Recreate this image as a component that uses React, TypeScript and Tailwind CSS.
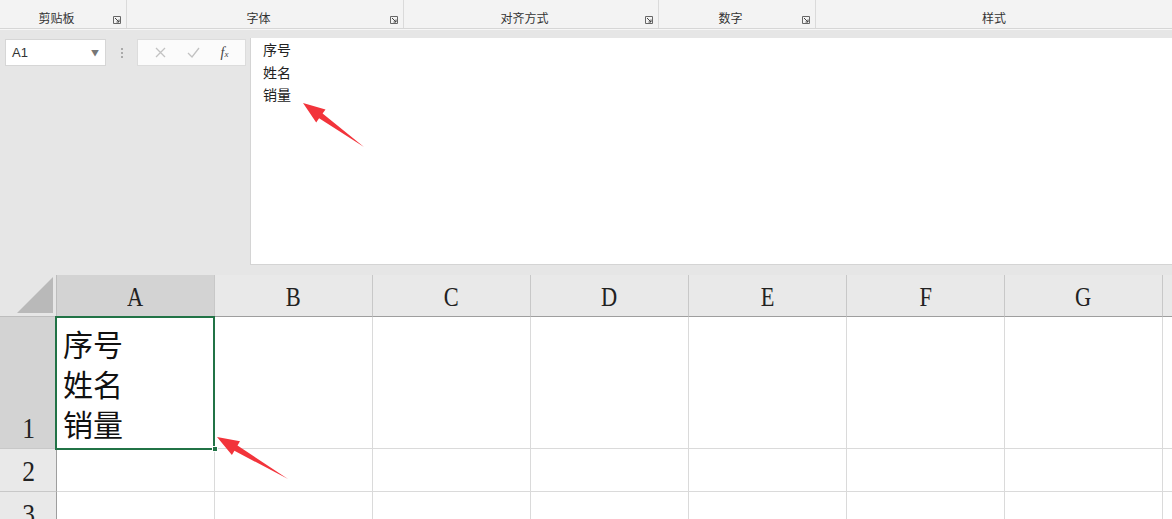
import React from "react";

const serif = { fontFamily: '"Liberation Serif", "Noto Sans CJK SC", serif' };
const sans = { fontFamily: '"Noto Sans CJK SC", "Liberation Sans", sans-serif' };

const groups = [
  { label: "剪贴板", w: "w-[127px]", launcher: true },
  { label: "字体", w: "w-[277px]", launcher: true },
  { label: "对齐方式", w: "w-[255px]", launcher: true },
  { label: "数字", w: "w-[157px]", launcher: true },
  { label: "样式", w: "flex-1", launcher: false },
];

const cols = ["A", "B", "C", "D", "E", "F", "G", ""];

function Launcher() {
  return (
    <svg width="8" height="8" viewBox="0 0 8 8" className="shrink-0">
      <path d="M0.5 0.5h7v7h-7z" fill="none" stroke="#666" strokeWidth="1" />
      <path d="M2 2l4 4M6 3.5V6H3.5" fill="none" stroke="#444" strokeWidth="1" />
    </svg>
  );
}

// red callout arrow, tip at the top-left, tail at (tx, ty)
function Arrow({ className, tx, ty }: { className: string; tx: number; ty: number }) {
  const len = Math.hypot(tx, ty);
  const ux = tx / len;
  const uy = ty / len;
  const head = 22;
  const hw = 8;
  const bx = ux * head;
  const by = uy * head;
  const px = -uy;
  const py = ux;
  const pts = [
    [0, 0],
    [bx + px * hw, by + py * hw],
    [bx + px * 3, by + py * 3],
    [tx, ty],
    [bx - px * 3, by - py * 3],
    [bx - px * hw, by - py * hw],
  ]
    .map(([x, y]) => `${(x + 2).toFixed(1)},${(y + 2).toFixed(1)}`)
    .join(" ");
  return (
    <svg className={className} width={tx + 10} height={ty + 10}>
      <polygon points={pts} fill="#f2343b" />
    </svg>
  );
}

export default function App() {
  return (
    <div className="relative w-[1172px] h-[519px] overflow-hidden bg-white text-black" style={sans}>
      {/* ribbon group labels */}
      <div className="flex h-[29px] bg-[#f3f3f3] border-b border-[#d6d6d6]">
        {groups.map((g, i) => (
          <div key={i} className={`${g.w} flex items-end pb-[3px] border-r border-[#dadada] last:border-r-0`}>
            <span className="flex-1 text-center text-[12px] leading-[14px] text-[#333]">{g.label}</span>
            {g.launcher && (
              <div className="pr-[5px] pb-[1px]">
                <Launcher />
              </div>
            )}
          </div>
        ))}
      </div>

      {/* formula bar */}
      <div className="flex h-[246px] bg-[#e6e6e6] border-t border-[#f6f6f6]">
        <div className="flex items-start pt-[9px] pl-[5px] gap-0">
          <div className="w-[101px] h-[27px] bg-white border border-[#d6d6d6] flex items-center justify-between px-[6px]">
            <span className="text-[13px] text-[#333]" style={{ fontFamily: '"Liberation Sans", sans-serif' }}>A1</span>
            <span className="text-[8px] text-[#777]">▼</span>
          </div>
          <div className="w-[31px] h-[27px] flex flex-col items-center justify-center gap-[2px]">
            <span className="w-[2px] h-[2px] bg-[#aaa]" />
            <span className="w-[2px] h-[2px] bg-[#aaa]" />
            <span className="w-[2px] h-[2px] bg-[#aaa]" />
          </div>
          <div className="w-[109px] h-[27px] bg-[#fbfbfb] border border-[#dcdcdc] flex items-center justify-around px-[6px]">
            <svg width="11" height="11" viewBox="0 0 11 11">
              <path d="M1 1l9 9M10 1l-9 9" stroke="#c2c2c2" strokeWidth="1.3" />
            </svg>
            <svg width="13" height="11" viewBox="0 0 13 11">
              <path d="M1 6l4 4 7-9" fill="none" stroke="#c2c2c2" strokeWidth="1.3" />
            </svg>
            <span className="text-[14px] italic text-[#444]" style={serif}>
              f<span className="text-[9px]">x</span>
            </span>
          </div>
        </div>
        <div className="ml-[4px] mt-[8px] h-[227px] flex-1 bg-white border-l border-b border-[#d4d4d4] pl-[12px] text-[14px] leading-[22.5px] text-[#222]">
          <div>序号</div>
          <div>姓名</div>
          <div>销量</div>
        </div>
      </div>

      {/* grid */}
      <div className="grid grid-cols-[57px_repeat(8,158px)] grid-rows-[42px_132px_43px_43px] bg-white">
        {/* select-all corner */}
        <div className="bg-[#e6e6e6] border-r border-b border-[#bdbdbd] flex items-end justify-end p-[3px]">
          <svg width="36" height="36" viewBox="0 0 36 36">
            <path d="M36 0V36H0Z" fill="#b9b9b9" />
          </svg>
        </div>
        {cols.map((c, i) => (
          <div
            key={i}
            className={`${i === 0 ? "bg-[#d3d3d3] border-b-[#217346]" : "bg-[#e9e9e9] border-b-[#9e9e9e]"} border-b border-r border-r-[#c8c8c8] flex items-end justify-center pb-[3px] text-[28px] leading-[32px] text-[#222]`}
            style={serif}
          >
            <span className="inline-block scale-x-[0.8]">{c}</span>
          </div>
        ))}

        {[1, 2, 3].map((r) => (
          <React.Fragment key={r}>
            <div
              className={`${r === 1 ? "bg-[#d3d3d3] border-r-[#217346]" : "bg-[#e9e9e9] border-r-[#9e9e9e]"} border-r border-b border-b-[#c8c8c8] flex items-end justify-center text-[30px] leading-[40px] text-[#222]`}
              style={serif}
            >
              <span className="inline-block scale-x-[0.85]">{r}</span>
            </div>
            {cols.map((c, i) => (
              <div
                key={c + r + i}
                className={`border-r border-b border-[#dadada] ${r === 1 && i === 0 ? "relative" : ""}`}
              >
                {r === 1 && i === 0 && (
                  <>
                    <div
                      className="absolute -left-[2px] -top-[1px] w-[160px] h-[134px] border-2 border-[#217346] pl-[6px] pt-[8px] text-[30px] leading-[40px] text-[#111]"
                      style={serif}
                    >
                      <div>序号</div>
                      <div>姓名</div>
                      <div>销量</div>
                    </div>
                    <div className="absolute -right-[4px] -bottom-[4px] w-[6px] h-[6px] bg-[#217346] border border-white" />
                  </>
                )}
              </div>
            ))}
          </React.Fragment>
        ))}
      </div>

      {/* annotation arrows */}
      <Arrow className="absolute left-[301px] top-[101px]" tx={61} ty={44} />
      <Arrow className="absolute left-[215px] top-[435px]" tx={71} ty={42} />
    </div>
  );
}
